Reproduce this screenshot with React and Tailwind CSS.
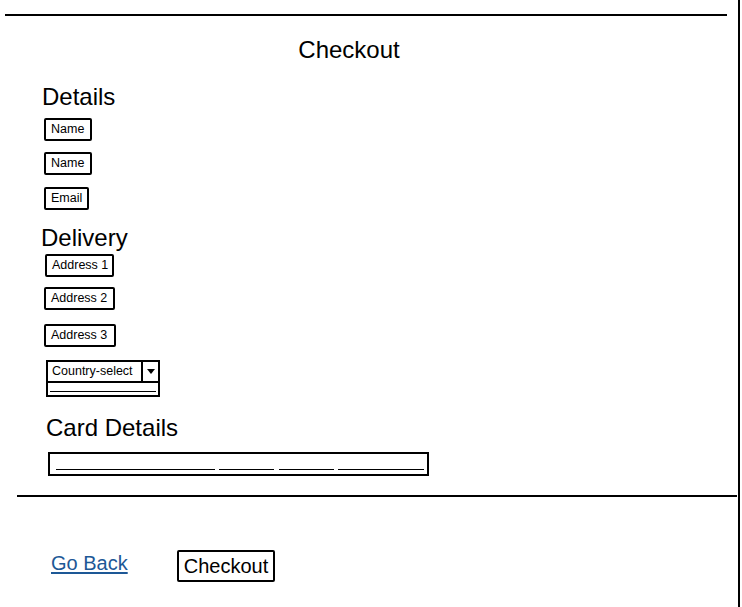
import React from 'react';

const Field = ({ label, className = '' }) => (
  <div className={`h-[23px] border-2 border-black rounded-[2px] px-[5px] flex items-center whitespace-nowrap text-[12.5px] leading-none text-black ${className}`}>
    {label}
  </div>
);

const Heading = ({ children, className = '' }) => (
  <div className={`text-[24px] leading-none h-[24px] text-black ${className}`}>{children}</div>
);

const cardSegments = [
  { left: 6, width: 159 },
  { left: 169, width: 55 },
  { left: 229, width: 55 },
  { left: 288, width: 86 },
];

const App = () => (
  <div className="w-[742px] h-[607px] bg-white overflow-hidden font-['Liberation_Sans',Arial,sans-serif]">
    <div className="w-[740px] h-[607px] border-r-2 border-black flex flex-col items-start">
      <div className="mt-[14px] ml-[5px] w-[722px] h-[2px] bg-black" />

      <Heading className="mt-[22px] w-[698px] text-center">Checkout</Heading>

      <Heading className="mt-[23px] ml-[42px]">Details</Heading>
      <Field label="Name" className="mt-[9px] ml-[44px] w-[48px]" />
      <Field label="Name" className="mt-[11px] ml-[44px] w-[48px]" />
      <Field label="Email" className="mt-[12px] ml-[44px] w-[45px]" />

      <Heading className="mt-[16px] ml-[41px]">Delivery</Heading>
      <Field label="Address 1" className="mt-[4px] ml-[45px] w-[69px]" />
      <Field label="Address 2" className="mt-[10px] ml-[44px] w-[71px]" />
      <Field label="Address 3" className="mt-[14px] ml-[44px] w-[72px]" />

      <div className="mt-[13px] ml-[46px] w-[114px]">
        <div className="h-[23px] border-2 border-black flex items-stretch text-[12.5px] leading-none">
          <div className="flex-1 flex items-center px-[4px] whitespace-nowrap">Country-select</div>
          <div className="w-[17px] border-l-2 border-black flex items-center justify-center">
            <svg width="8" height="5" viewBox="0 0 8 5"><path d="M0 0 L8 0 L4 5 Z" fill="#000" /></svg>
          </div>
        </div>
        <div className="h-[14px] border-2 border-t-0 border-black flex flex-col justify-end">
          <div className="h-[1px] bg-black mx-[2px] mb-[3px]" />
        </div>
      </div>

      <Heading className="mt-[19px] ml-[46px]">Card Details</Heading>
      <div className="mt-[12px] ml-[48px] w-[381px] h-[24px] border-2 border-black relative">
        {cardSegments.map((s) => (
          <div key={s.left} className="absolute top-[15px] h-[1px] bg-black" style={{ left: s.left, width: s.width }} />
        ))}
      </div>

      <div className="mt-[19px] ml-[17px] w-[720px] h-[2px] bg-black" />

      <div className="mt-[53px] ml-[51px] flex items-start">
        <a href="#" className="mt-[3px] text-[20px] leading-none text-[#1d5896] underline underline-offset-2">Go Back</a>
        <button className="ml-[49px] h-[32px] px-[5px] border-2 border-black rounded-[2px] text-[20px] leading-none text-black bg-white">
          Checkout
        </button>
      </div>
    </div>
  </div>
);

export default App;
